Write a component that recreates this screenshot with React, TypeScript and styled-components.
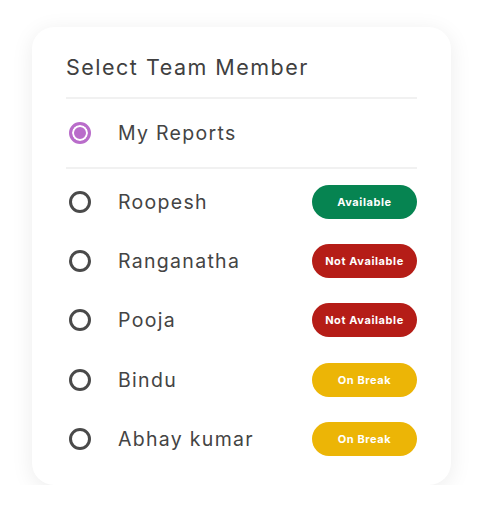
import styled, { createGlobalStyle } from "styled-components";

const Global = createGlobalStyle`
	body {
		margin: 0;
		background: #ffffff;
		font-family: "Inter", "Noto Sans", sans-serif;
	}
`;

const Page = styled.div`
	padding: 27px 32px 0 32px;
`;

const Card = styled.div`
	width: 419px;
	box-sizing: border-box;
	background: #ffffff;
	border-radius: 22px;
	box-shadow: 0 4px 22px rgba(0, 0, 0, 0.08);
	padding: 25px 34px 17px 34px;
`;

const Title = styled.h2`
	margin: 0;
	font-size: 21.5px;
	font-weight: 400;
	color: #404040;
	letter-spacing: 1.5px;
	line-height: 30px;
	padding: 0 0 15px 0;
	border-bottom: 2px solid #f1f1f1;
`;

const List = styled.div`
	padding-top: 3px;
`;

const Row = styled.label<{ $divider?: boolean }>`
	display: flex;
	align-items: center;
	height: ${(p) => (p.$divider ? "68px" : "59.3px")};
	border-bottom: ${(p) => (p.$divider ? "2px solid #f1f1f1" : "none")};
	cursor: pointer;
`;

const Radio = styled.span<{ $checked?: boolean }>`
	width: 22px;
	height: 22px;
	box-sizing: border-box;
	border-radius: 50%;
	margin-left: 3px;
	border: 3px solid ${(p) => (p.$checked ? "#b96cca" : "#4a4a4a")};
	background: ${(p) => (p.$checked ? "#b96cca" : "#ffffff")};
	box-shadow: ${(p) => (p.$checked ? "inset 0 0 0 2px #ffffff" : "none")};
	flex-shrink: 0;
`;

const Name = styled.span`
	flex: 1;
	margin-left: 27px;
	font-size: 19.5px;
	color: #444444;
	letter-spacing: 1.3px;
`;

const Badge = styled.span<{ $color: string }>`
	width: 105px;
	height: 34px;
	border-radius: 17px;
	background: ${(p) => p.$color};
	color: #ffffff;
	font-size: 11px;
	font-weight: 700;
	letter-spacing: 0.6px;
	display: flex;
	align-items: center;
	justify-content: center;
`;

const statusColors: Record<string, string> = {
	Available: "#068451",
	"Not Available": "#b51d17",
	"On Break": "#ecb506",
};

const members = [
	{ name: "Roopesh", status: "Available" },
	{ name: "Ranganatha", status: "Not Available" },
	{ name: "Pooja", status: "Not Available" },
	{ name: "Bindu", status: "On Break" },
	{ name: "Abhay kumar", status: "On Break" },
];

export default function App() {
	return (
		<Page>
			<Global />
			<Card>
				<Title>Select Team Member</Title>
				<Row $divider>
					<Radio $checked />
					<Name>My Reports</Name>
				</Row>
				<List>
					{members.map((m) => (
						<Row key={m.name}>
							<Radio />
							<Name>{m.name}</Name>
							<Badge $color={statusColors[m.status]}>{m.status}</Badge>
						</Row>
					))}
				</List>
			</Card>
		</Page>
	);
}
